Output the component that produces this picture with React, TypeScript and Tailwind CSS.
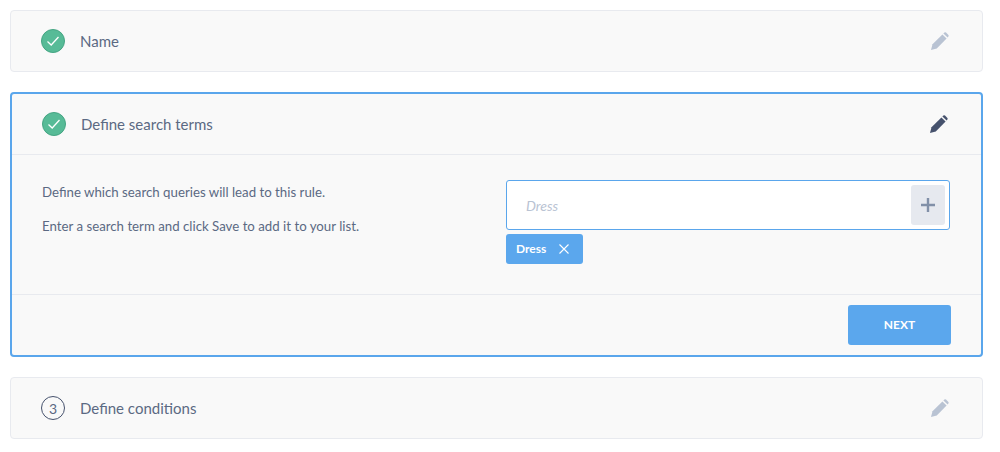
const font = "font-['Lato','Noto_Sans',sans-serif]";

const PencilIcon = ({ className }: { className: string }) => (
    <svg className={`ml-auto ${className}`} width="18" height="18" viewBox="0 0 18 18" fill="currentColor">
        <path d="M0 18 L1.5 12.2 L11.4 2.4 L15.6 6.6 L5.8 16.5 Z" />
        <path d="M12.4 1.4 L13.4 0.6 Q14.2 0 15 0.6 L17.4 3 Q18 3.8 17.4 4.6 L16.6 5.6 Z" />
    </svg>
);

const CheckIcon = () => (
    <span className="flex h-6 w-6 shrink-0 items-center justify-center rounded-full border border-[#45a583] bg-[#57bb97]">
        <svg width="14" height="12" viewBox="0 0 14 12" fill="none">
            <path d="M1.5 6.5 L5.2 10 L12.5 2" stroke="#ffffff" strokeWidth="1.3" />
        </svg>
    </span>
);

const CollapsedCard = ({ icon, title }: { icon: React.ReactNode; title: string }) => (
    <div className="flex h-[62px] items-center rounded-[4px] border border-[#e8eaef] bg-[#f9f9f9] pl-[30px] pr-[33px]">
        {icon}
        <span className="ml-[15px] text-[15px] text-[#5b6983]">{title}</span>
        <PencilIcon className="text-[#b9c3d3]" />
    </div>
);

export default function App() {
    return (
        <div className={`${font} flex h-[452px] w-[1000px] flex-col gap-5 bg-white pl-[10px] pr-[17px] pt-[10px]`}>
            <CollapsedCard icon={<CheckIcon />} title="Name" />

            <div className="flex h-[265px] flex-col rounded-[4px] border-2 border-[#5aa6ec] bg-[#f9f9f9]">
                <div className="flex h-[61px] items-center border-b border-[#e8eaef] pl-[30px] pr-[33px]">
                    <CheckIcon />
                    <span className="ml-[15px] text-[15px] text-[#5b6983]">Define search terms</span>
                    <PencilIcon className="text-[#46526d]" />
                </div>

                <div className="flex h-[140px] border-b border-[#e8eaef] pl-[30px] pr-[31px] pt-[25px]">
                    <div className="w-[464px] text-[13.25px] text-[#5b6983]">
                        <p className="mt-[3px] leading-[18px]">Define which search queries will lead to this rule.</p>
                        <p className="mt-4 leading-[18px]">Enter a search term and click Save to add it to your list.</p>
                    </div>
                    <div className="flex-1">
                        <div className="flex h-[50px] items-center rounded-[3px] border border-[#5aa6ec] bg-white pl-[19px] pr-1">
                            <span className="text-[14px] italic text-[#b9c3d3]">Dress</span>
                            <span className="ml-auto flex h-10 w-[34px] items-center justify-center rounded-[3px] bg-[#e6e9ef]">
                                <svg width="14" height="14" viewBox="0 0 14 14">
                                    <path d="M0 5.8h14v2.4H0zM5.8 0h2.4v14H5.8z" fill="#8190a8" />
                                </svg>
                            </span>
                        </div>
                        <div className="mt-1 flex h-[30px] w-[77px] items-center rounded-[3px] bg-[#5ba7ed] pl-[10px] text-[12px] font-bold text-white">
                            Dress
                            <svg className="ml-[13px]" width="10" height="10" viewBox="0 0 10 10">
                                <path d="M0.5 0.5 L9.5 9.5 M9.5 0.5 L0.5 9.5" stroke="#ffffff" strokeWidth="1.1" />
                            </svg>
                        </div>
                    </div>
                </div>

                <div className="flex flex-1 items-start justify-end pr-[30px] pt-[10px]">
                    <button className="h-10 w-[103px] rounded-[3px] bg-[#5ba7ed] text-[12px] font-bold text-white">NEXT</button>
                </div>
            </div>

            <CollapsedCard
                icon={
                    <span className="flex h-6 w-6 shrink-0 items-center justify-center rounded-full border border-[#46526d] text-[14px] text-[#5b6983]">3</span>
                }
                title="Define conditions"
            />
        </div>
    );
}
